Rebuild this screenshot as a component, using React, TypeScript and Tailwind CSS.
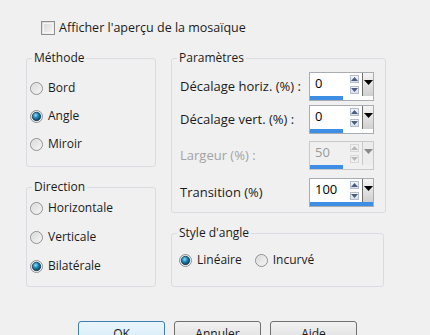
import React from 'react';

const font = { fontFamily: '"Open Sans", "Noto Sans", sans-serif' };

const Radio = ({ checked }: { checked?: boolean }) => (
    <svg width="13" height="13" viewBox="0 0 13 13" className="shrink-0">
        <defs>
            <linearGradient id="rbg" x1="0" y1="0" x2="1" y2="1">
                <stop offset="0" stopColor="#d4d4d4" />
                <stop offset="1" stopColor="#fbfbfb" />
            </linearGradient>
            <radialGradient id="rdot" cx="0.4" cy="0.35" r="0.7">
                <stop offset="0" stopColor="#8ee0fb" />
                <stop offset="0.45" stopColor="#1c86b8" />
                <stop offset="1" stopColor="#08364f" />
            </radialGradient>
        </defs>
        <circle cx="6.5" cy="6.5" r="6" fill="url(#rbg)" stroke="#8f8f8f" />
        <circle cx="6.5" cy="6.5" r="4.8" fill="none" stroke="#e8e8e8" strokeWidth="0.8" />
        {checked && <circle cx="6.5" cy="6.5" r="4.2" fill="url(#rdot)" stroke="#0b3047" strokeWidth="0.7" />}
    </svg>
);

const RadioItem = ({ label, checked }: { label: string; checked?: boolean }) => (
    <div className="flex items-center gap-[5px] h-[16px]">
        <Radio checked={checked} />
        <span>{label}</span>
    </div>
);

const Arrow = ({ up, disabled }: { up?: boolean; disabled?: boolean }) => (
    <div className={`w-[9px] h-[8px] border flex items-center justify-center ${disabled ? 'border-[#d8d8d8] bg-[#f0f0f0]' : 'border-[#b4bdcc] bg-gradient-to-b from-[#f4f6fa] to-[#d9e0ea]'}`}>
        <svg width="7" height="4" viewBox="0 0 7 4">
            <polygon points={up ? '0,4 3.5,0 7,4' : '0,0 3.5,4 7,0'} fill={disabled ? '#b8b8b8' : '#4b5d83'} />
        </svg>
    </div>
);

const Spin = ({ value, bar, disabled }: { value: string; bar: number; disabled?: boolean }) => (
    <div className={`w-[65px] h-[29px] border flex flex-col ${disabled ? 'border-[#c9c9c9] bg-[#f0f0f0]' : 'border-[#a8acb3] bg-white'}`}>
        <div className="flex flex-1">
            <div className={`flex-1 pl-[5px] pt-[1px] text-[13px] ${disabled ? 'text-[#9a9a9a]' : 'text-black'}`}>{value}</div>
            <div className="flex flex-col gap-[3px] pt-[2px] mr-[3px]">
                <Arrow up disabled={disabled} />
                <Arrow disabled={disabled} />
            </div>
            <div className={`w-[11px] flex flex-col items-center border-l ${disabled ? 'border-[#c9c9c9] bg-[#ececec]' : 'border-[#6f6f6f] bg-gradient-to-b from-[#f5f5f5] to-[#cfcfcf]'}`}>
                <svg width="9" height="5" viewBox="0 0 9 5" className="mt-[7px]">
                    <polygon points="0,0 4.5,5 9,0" fill={disabled ? '#8a8a8a' : '#000'} />
                </svg>
            </div>
        </div>
        <div className="h-[4px] flex">
            <div className="h-full bg-[#3d8ee4]" style={{ width: bar }} />
        </div>
    </div>
);

const Group = ({ title, className, children }: { title: string; className: string; children: React.ReactNode }) => (
    <fieldset className={`border border-[#d9dde2] rounded-[3px] ${className}`}>
        <legend className="ml-[5px] px-[2px] leading-[16px]">{title}</legend>
        {children}
    </fieldset>
);

const Button = ({ label, primary }: { label: string; primary?: boolean }) => (
    <div className={`w-[87px] h-[23px] rounded-[3px] border flex justify-center pt-[5px] ${primary ? 'border-[#3c7fb1] bg-gradient-to-b from-[#eaf6fd] to-[#d7eaf7]' : 'border-[#707070] bg-gradient-to-b from-[#f2f2f2] to-[#dcdcdc]'}`}>
        <span className="leading-[14px]">{label}</span>
    </div>
);

const App: React.FC = () => {
    return (
        <div className="w-[430px] h-[335px] bg-[#f0f0f0] overflow-hidden text-[12px] text-[#1b1b1b]" style={font}>
            <div className="flex items-center pt-[21px] pl-[41px] h-[35px]">
                <div className="w-[14px] h-[14px] border border-[#8f8f8f] bg-gradient-to-br from-[#d6d6d6] to-[#f7f7f7] p-[1px]">
                    <div className="w-full h-full border border-[#f4f4f4]" />
                </div>
                <span className="ml-[4px] text-[12.5px]">Afficher l'aperçu de la mosaïque</span>
            </div>
            <div className="flex pl-[26px] mt-[15px]">
                <div className="w-[130px] flex flex-col">
                    <Group title="Méthode" className="h-[117px]">
                        <div className="flex flex-col gap-[12px] pt-[14px] pl-[3px]">
                            <RadioItem label="Bord" />
                            <RadioItem label="Angle" checked />
                            <RadioItem label="Miroir" />
                        </div>
                    </Group>
                    <Group title="Direction" className="h-[108px] mt-[12px]">
                        <div className="flex flex-col gap-[13px] pt-[5px] pl-[3px]">
                            <RadioItem label="Horizontale" />
                            <RadioItem label="Verticale" />
                            <RadioItem label="Bilatérale" checked />
                        </div>
                    </Group>
                </div>
                <div className="w-[215px] ml-[15px] flex flex-col">
                    <Group title="Paramètres" className="h-[163px]">
                        <div className="flex flex-col pl-[8px] pr-[11px] pt-[6px] text-[13px]">
                            <div className="flex items-center justify-between">
                                <span>Décalage horiz. (%) :</span>
                                <Spin value="0" bar={33} />
                            </div>
                            <div className="flex items-center justify-between mt-[4px]">
                                <span>Décalage vert. (%) :</span>
                                <Spin value="0" bar={33} />
                            </div>
                            <div className="flex items-center justify-between mt-[7px]">
                                <span className="text-[#a3a3a3]">Largeur (%) :</span>
                                <Spin value="50" bar={33} disabled />
                            </div>
                            <div className="flex items-center justify-between mt-[8px]">
                                <span>Transition (%)</span>
                                <Spin value="100" bar={63} />
                            </div>
                        </div>
                    </Group>
                    <Group title="Style d'angle" className="h-[62px] w-[213px] mt-[12px]">
                        <div className="flex items-center pt-[11px] pl-[7px]">
                            <RadioItem label="Linéaire" checked />
                            <div className="ml-[13px]">
                                <RadioItem label="Incurvé" />
                            </div>
                        </div>
                    </Group>
                </div>
            </div>
            <div className="flex gap-[9px] pl-[78px] mt-[34px]">
                <Button label="OK" primary />
                <Button label="Annuler" />
                <Button label="Aide" />
            </div>
        </div>
    );
};

export default App;
